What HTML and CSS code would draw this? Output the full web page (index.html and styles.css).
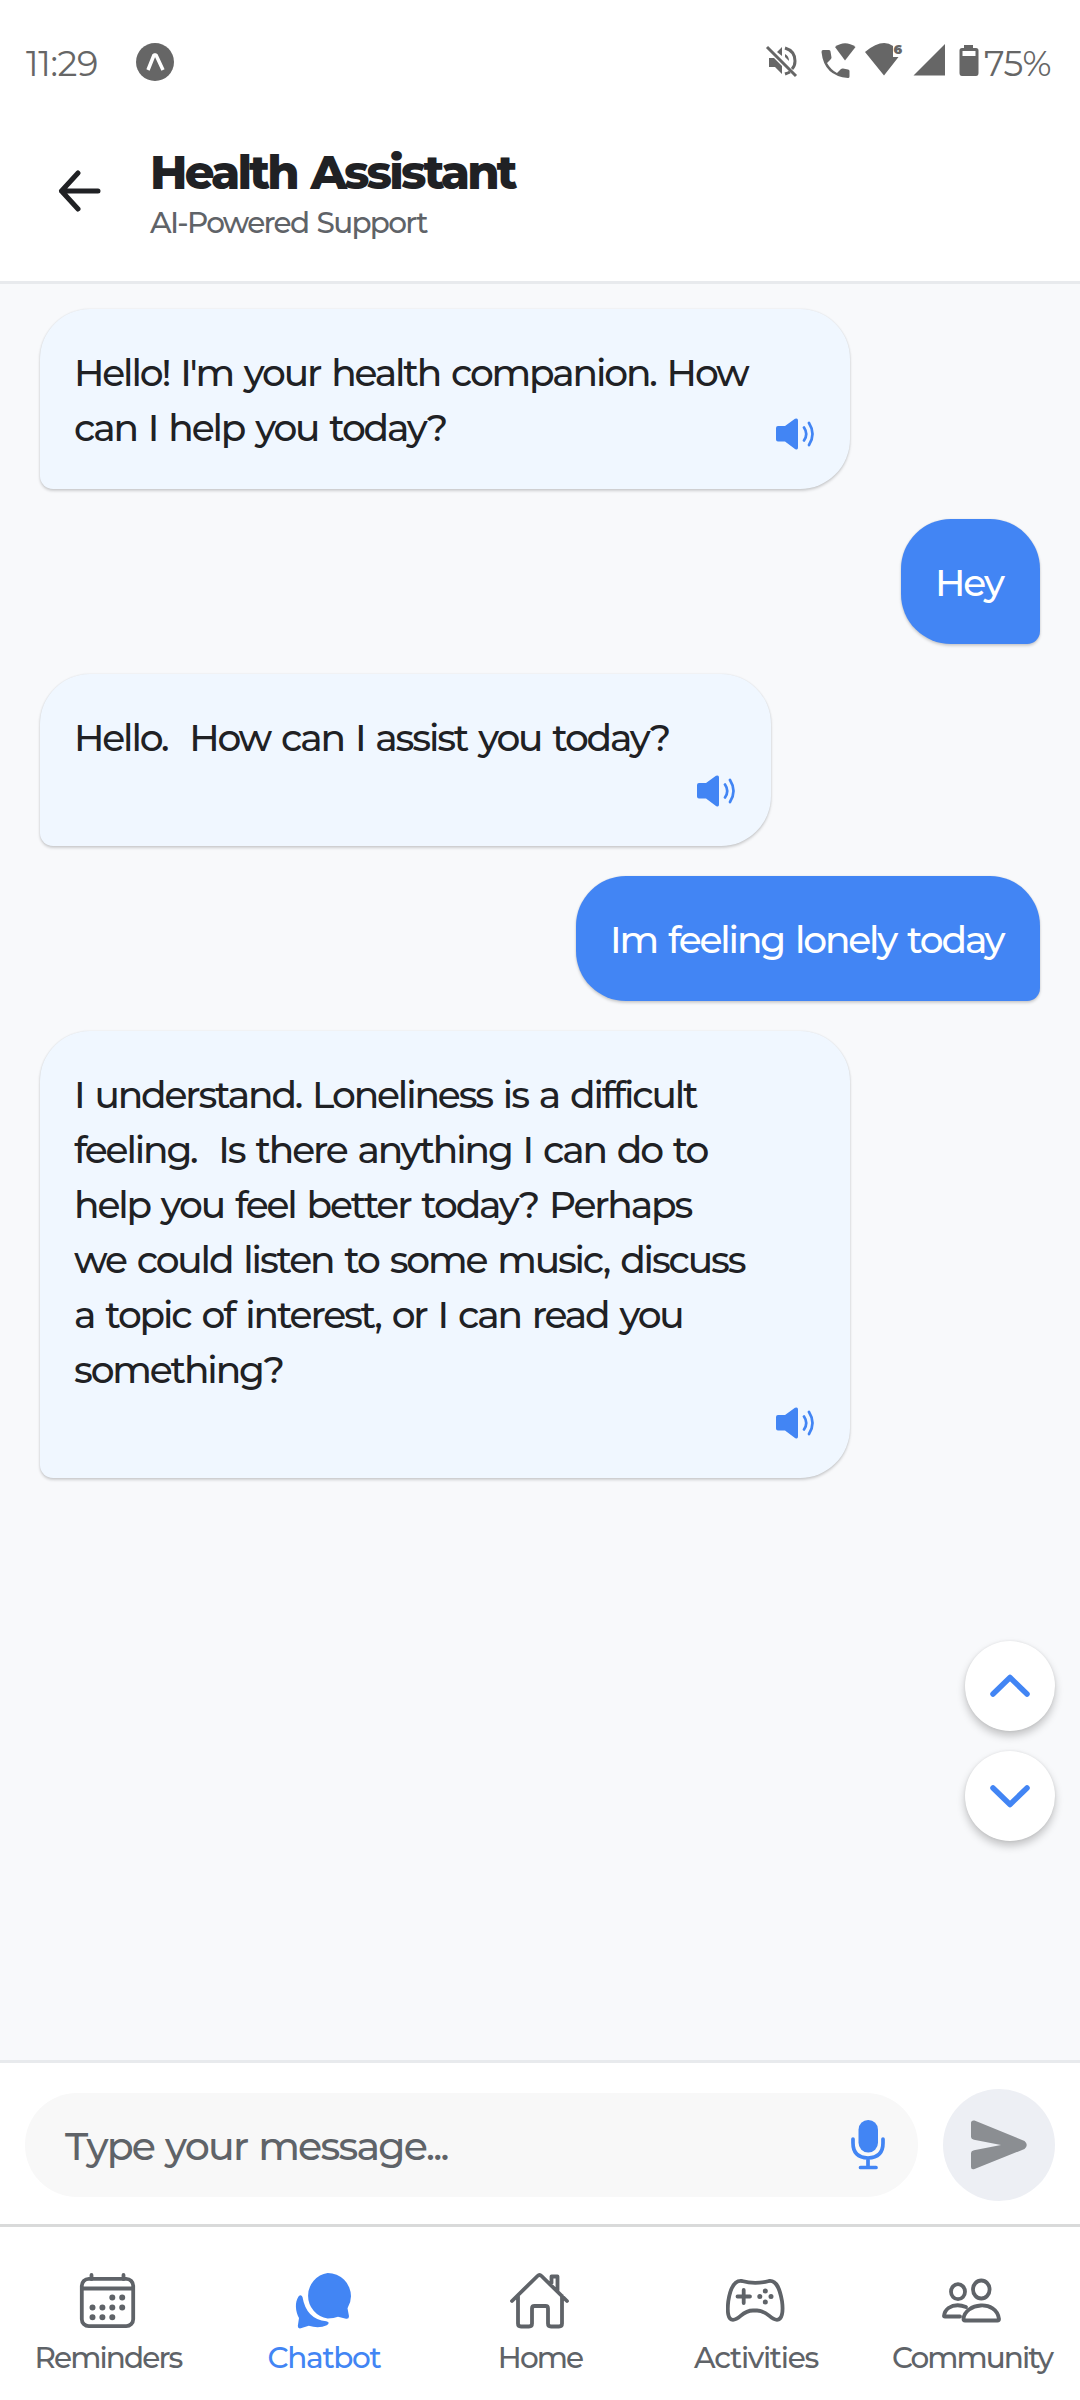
FILE: index.html
```html
<!DOCTYPE html>
<html lang="en">
<head>
<meta charset="utf-8">
<title>Health Assistant</title>
<link rel="stylesheet" href="styles.css">
</head>
<body>
<svg width="0" height="0" class="defs">
  <symbol id="speaker" viewBox="0 0 38 32">
    <path fill="currentColor" d="M2 8h7L19 .8Q22-.5 22 2.500v27Q22 32.500 19 31L9 23.500H2Q0 23.500 0 21.500V10Q0 8 2 8z"/>
    <path fill="none" stroke="currentColor" stroke-width="2.700" stroke-linecap="round" d="M28 9.500q4.500 6.500 0 13M33 5q7 11 0 22"/>
  </symbol>
</svg>
<div class="screen">
  <div class="status">
    <span class="clock">11:29</span>
    <svg class="expo" width="38" height="38" viewBox="0 0 38 38"><circle cx="19" cy="19" r="19" fill="#666"/><path d="M12 27l6-15h2l7 15" fill="none" stroke="#fff" stroke-width="3.500" stroke-linejoin="bevel"/></svg>
    <svg class="sysicons" width="220" height="44" viewBox="762 42 220 44" fill="#666">
      <path d="M767 49l29 29" stroke="#666" stroke-width="3" fill="none"/>
      <path d="M769 60v9h6l7 7v-8l-8-8zM777 54l5-5v9zM785 56q4 2 4 7l-4-4z"/>
      <path d="M785 50q10 3 10 13 0 5-3 8M785 76q3-1 5-2" fill="none" stroke="#666" stroke-width="3"/>
      <path d="M823 52h6q1.500 0 1.500 1.500l1 6q0 1-1 2l-3.500 3.500q4 7 10 10l4-4q1-.7 2-.5l5 1q1.500.3 1.500 1.500v5.500q0 1.500-1.500 1.500Q824 78 821.500 54q0-2 1.500-2z"/>
      <path d="M835 49q10-7.500 20.500 0L845 62.500z"/>
      <path d="M865 54q17-14 28-6v11h5.500L884 77.500z"/>
      <text x="893.500" y="56" class="six">6</text>
      <path d="M945 46v31.500h-31.500z"/>
      <path fill-rule="evenodd" d="M964 47h9v3h3q2.500 0 2.500 2.500V75q0 3-2.500 3h-14q-2.500 0-2.500-3V52.500q0-2.500 2.500-2.500h2zM962.500 53v5h13v-5z"/>
    </svg>
    <span class="battery">75%</span>
  </div>
  <header class="header">
    <svg width="44" height="42" viewBox="0 0 44 42"><path d="M20 3L3.500 21 20 39M3.500 21H40" fill="none" stroke="#202124" stroke-width="5" stroke-linecap="round" stroke-linejoin="round"/></svg>
    <div class="titles"><h1>Health Assistant</h1><p>AI-Powered Support</p></div>
  </header>
  <main class="chat">
    <div class="bubble bot inline"><p>Hello! I'm your health companion. How<br>can I help you today?</p><svg class="speaker"><use href="#speaker"/></svg></div>
    <div class="bubble user short"><p>Hey</p></div>
    <div class="bubble bot greet"><p>Hello.&nbsp; How can I assist you today?</p><svg class="speaker"><use href="#speaker"/></svg></div>
    <div class="bubble user long"><p>Im feeling lonely today</p></div>
    <div class="bubble bot"><p>I understand. Loneliness is a difficult<br>feeling.&nbsp; Is there anything I can do to<br>help you feel better today? Perhaps<br>we could listen to some music, discuss<br>a topic of interest, or I can read you<br>something?</p><svg class="speaker"><use href="#speaker"/></svg></div>
    <div class="scrollers">
      <div class="round"><svg width="40" height="24" viewBox="0 0 40 24"><path d="M3 20L20 3.500 37 20"/></svg></div>
      <div class="round"><svg width="40" height="24" viewBox="0 0 40 24"><path d="M3 4L20 20.500 37 4"/></svg></div>
    </div>
  </main>
  <div class="composer">
    <div class="field"><span>Type your message...</span>
      <svg width="34" height="50" viewBox="0 0 34 50" fill="none" stroke="#4285f4" stroke-width="3.700" stroke-linecap="round"><rect x="7.500" y="0" width="19.500" height="32.500" rx="9.700" fill="#4285f4" stroke="none"/><path d="M2 19v4q0 14.500 15 15 15-.5 15-15v-4M17 38v9.500M9.500 47.500h15.500"/></svg>
    </div>
    <div class="send"><svg width="56" height="50" viewBox="0 0 56 50"><path fill="#8b8e92" d="M0 3Q0 0 3.500.5L53.500 21q4.500 4 0 8L3.500 49Q0 50 0 47V33q0-2 3-2.800L30 25 3 19.800Q0 19 0 17z"/></svg></div>
  </div>
  <nav class="tabs">
    <div class="tab"><svg width="60" height="60" viewBox="78 2271 60 60" fill="none" stroke="currentColor" stroke-width="3.800" stroke-linecap="round"><rect x="81.800" y="2278.800" width="51.400" height="47.400" rx="7"/><path d="M91.500 2275v4M123.500 2275v4M82 2288.500h51"/><path stroke-width="6" d="M112.300 2297.500h.01M122.200 2297.500h.01M92.500 2307.500h.01M102.400 2307.500h.01M112.300 2307.500h.01M122.200 2307.500h.01M92.500 2317.300h.01M102.400 2317.300h.01M112.300 2317.300h.01"/></svg><span>Reminders</span></div>
    <div class="tab active"><svg width="60" height="60" viewBox="294 2271 60 60" fill="currentColor"><path d="M327.700 2273a23.300 23.300 0 0 1 23.300 23.300q0 6-3.500 12l1.500 8q0 3-3 2.500l-8-2q-4 1.700-10.300 1.700a23 23 0 0 1 0-45.500z"/><path d="M302.500 2297q-1.500-3-4-.5c-4 6-3 15 .5 21.500l-1.200 8q0 3 3 2.300l8-2.500q10 3 18-.5 4-3-.5-4-20-2-23.800-24.300z"/></svg><span class="loose">Chatbot</span></div>
    <div class="tab"><svg width="60" height="60" viewBox="510 2271 60 60" fill="none" stroke="currentColor" stroke-width="3.800" stroke-linecap="round" stroke-linejoin="round"><path d="M512 2301l25.500-25q2-2 4 0l25.500 25M518 2296v27.500q0 3 3 3h8q3 0 3-3v-15q0-2.500 2.500-2.500h11q2.500 0 2.500 2.500v15q0 3 3 3h8q3 0 3-3V2296M551.500 2283v-6.500h6v14"/></svg><span>Home</span></div>
    <div class="tab"><svg width="60" height="60" viewBox="726 2271 60 60" fill="none" stroke="currentColor" stroke-width="3.800" stroke-linecap="round" stroke-linejoin="round"><path d="M742 2281q13 3.800 27 0C777 2280 780 2290 782 2301C783.500 2312 782 2319.800 777 2319.800C770 2319.800 768 2310.500 757 2310.500h-4C742 2310.500 740 2319.800 733 2319.800C728 2319.800 727 2312 728.300 2301C730 2290 734 2280 742 2281zM743.700 2290v13M737.500 2296.500h12.500"/><path stroke-width="5" d="M765.300 2291h.01M765.300 2302h.01M759.800 2296.500h.01M771 2296.500h.01"/></svg><span class="loose">Activities</span></div>
    <div class="tab"><svg width="60" height="60" viewBox="942 2271 60 60" fill="none" stroke="currentColor" stroke-width="3.800" stroke-linecap="round" stroke-linejoin="round"><ellipse cx="958" cy="2291.700" rx="7" ry="7.500"/><ellipse cx="981.300" cy="2289.500" rx="8.300" ry="9"/><path d="M966 2307q-10-4-17.500 1-4 3-4.500 8 0 .5 1 .5h15M963.500 2319c1-16 33-20 35.500 0q0 1.500-1.500 1.500h-32.500q-1.500 0-1.500-1.500z"/></svg><span>Community</span></div>
  </nav>
</div>
</body>
</html>
```
FILE: styles.css
```css
* { box-sizing: border-box; margin: 0; padding: 0; }
body { font-family: Montserrat, Lato, sans-serif; font-weight: 500; color: #202124; background: #fff; font-variant-ligatures: none; }
svg { display: block; flex: none; }
.defs { position: absolute; }
.screen { width: 1080px; height: 2400px; display: flex; flex-direction: column; }
.status { height: 124px; padding-left: 26px; display: flex; align-items: center; color: #666; font-size: 35px; font-weight: 400; }
.clock { width: 110px; letter-spacing: -.4px; padding-top: 3px; }
.sysicons { margin-left: 588px; }
.battery { margin-left: 2px; letter-spacing: -.4px; padding-top: 3px; }
.six { font-size: 13px; font-weight: 900; letter-spacing: 0; }
.header { height: 160px; border-bottom: 3px solid #e8eaed; padding: 0 58px 23px; display: flex; align-items: center; gap: 48px; }
.titles { padding-top: 7px; }
h1 { font-size: 46.500px; line-height: 54px; font-weight: 800; letter-spacing: -2.800px; word-spacing: 3px; white-space: nowrap; }
.titles p { font-size: 29.500px; line-height: 44px; letter-spacing: -1.700px; word-spacing: 2px; color: #5f6368; }
.chat { height: 1776px; background: #f8f9fb; padding: 25px 40px 0; display: flex; flex-direction: column; align-items: flex-start; gap: 30px; }
.bubble { padding: 36px 35px 34px 34px; font-size: 37.500px; line-height: 55px; letter-spacing: -2.150px; word-spacing: 3px; border-radius: 50px; white-space: nowrap; display: flex; flex-direction: column; flex: none; box-shadow: 0 2px 3px rgba(0,0,0,.17), 0 0 2px rgba(0,0,0,.1); }
.bot { width: 810px; background: #f0f7ff; border-bottom-left-radius: 13px; padding-right: 36px; padding-bottom: 39px; }
.bot.greet { width: 731px; }
.bot.inline { flex-direction: row; align-items: flex-end; justify-content: space-between; height: 180px; padding-bottom: 34px; }
.speaker { width: 38px; height: 32px; color: #4285f4; align-self: flex-end; margin-top: 10px; }
.bot.inline .speaker { margin-bottom: 5px; margin-top: 0; }
.user { align-self: flex-end; background: #4285f4; color: #fff; border-bottom-right-radius: 13px; }
.user.short { width: 139px; }
.user.long { width: 464px; }
.scrollers { align-self: flex-end; margin: 133px -15px 0 0; display: flex; flex-direction: column; gap: 20px; }
.round { width: 90px; height: 90px; border-radius: 50%; background: #fff; display: flex; align-items: center; justify-content: center; box-shadow: 0 5px 8px rgba(0,0,0,.22), 0 0 3px rgba(0,0,0,.08); }
.round path { fill: none; stroke: #4285f4; stroke-width: 5.500; stroke-linecap: round; stroke-linejoin: round; }
.composer { height: 164px; border-top: 3px solid #e8eaed; padding: 3px 25px 0; display: flex; align-items: center; justify-content: space-between; }
.field { width: 893px; height: 104px; border-radius: 52px; background: #f8f8f8; padding: 0 33px 0 40px; display: flex; align-items: center; justify-content: space-between; font-size: 39.500px; letter-spacing: -1.800px; word-spacing: 2px; color: #5f6368; }
.field span { padding-top: 2px; }
.send { width: 112px; height: 112px; border-radius: 50%; background: #edeff4; display: flex; align-items: center; justify-content: center; }
.tabs { height: 176px; border-top: 3px solid #d9dada; display: flex; }
.tab { width: 216px; display: flex; flex-direction: column; align-items: center; padding-top: 44px; font-size: 29.500px; line-height: 40px; letter-spacing: -1.900px; color: #5f6368; gap: 6px; }
.tab.active { color: #4285f4; }
.loose { letter-spacing: -1.300px; }
```
